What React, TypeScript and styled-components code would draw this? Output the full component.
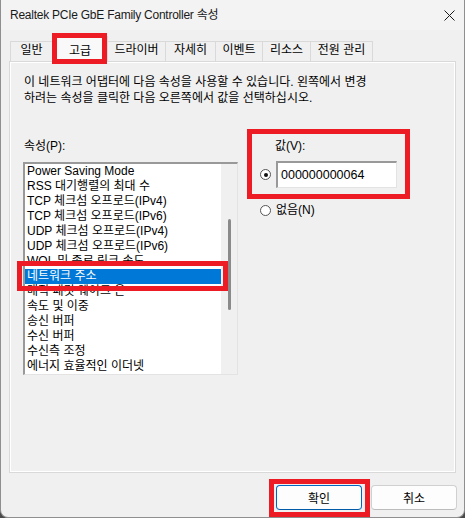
import React from "react";
import styled, { createGlobalStyle } from "styled-components";

const Global = createGlobalStyle`
    html, body {
        margin:0;
        padding:0;
        background:#4a4a4a;
    }
    body {
        font-family: "Liberation Sans", "Noto Sans CJK KR", sans-serif;
        font-size:12px;
        color:#000;
    }
`;

const Window = styled.div`
    width:465px;
    height:518px;
    box-sizing:border-box;
    background:#f0f0f0;
    border:1px solid #8f8f8f;
    border-top:none;
    border-radius:0 0 8px 8px;
    display:flex;
    flex-direction:column;
    overflow:hidden;
`;

const TitleBar = styled.div`
    height:30px;
    flex:0 0 30px;
    display:flex;
    align-items:center;
    justify-content:space-between;
    padding:0 9px 0 9px;
    background:#f3f3f3;
    color:#1a1a1a;
`;

const Title = styled.span`
    line-height:16px;
    letter-spacing:-0.25px;
`;

const TabStrip = styled.div`
    height:31px;
    flex:0 0 31px;
    display:flex;
    align-items:flex-end;
    margin:0 8px;
    padding-left:1px;
`;

const Tab = styled.div<{ $w: number; $active?: boolean }>`
    position:relative;
    width:${p => p.$w}px;
    height:${p => (p.$active ? 26 : 20)}px;
    margin-left:-1px;
    margin-bottom:${p => (p.$active ? -1 : 0)}px;
    box-sizing:border-box;
    border:1px solid #d9d9d9;
    border-bottom:none;
    background:${p => (p.$active ? "#f9f9f9" : "#f0f0f0")};
    z-index:${p => (p.$active ? 1 : 0)};
    display:flex;
    align-items:flex-end;
    justify-content:center;
    padding-bottom:4px;
    line-height:14px;
    white-space:nowrap;
    &:first-child {
        margin-left:0;
    }
`;

const Panel = styled.div`
    flex:0 0 412px;
    margin:0 8px;
    box-sizing:border-box;
    border:1px solid #d9d9d9;
    box-shadow:inset 0 0 0 1px #fff;
    padding:12px 13px 0 13px;
`;

const Desc = styled.div`
    padding-left:1px;
    line-height:16px;
    white-space:nowrap;
`;

const Columns = styled.div`
    display:flex;
    align-items:flex-start;
    margin-top:32px;
`;

const LeftCol = styled.div`
    width:215px;
    display:flex;
    flex-direction:column;
`;

const RightCol = styled.div`
    margin-left:22px;
    display:flex;
    flex-direction:column;
`;

const FieldLabel = styled.div<{ $indent: number }>`
    padding-left:${p => p.$indent}px;
    line-height:16px;
`;

const ListBox = styled.div`
    margin-top:8px;
    height:213px;
    box-sizing:border-box;
    border-style:solid;
    border-width:2px 1px 1px 2px;
    border-color:#999 #e3e3e3 #e3e3e3 #999;
    display:flex;
    background:#fff;
`;

const Items = styled.div`
    flex:1;
    display:flex;
    flex-direction:column;
`;

const Item = styled.div<{ $selected?: boolean }>`
    position:relative;
    height:15px;
    flex:0 0 15px;
    line-height:15px;
    padding-left:2px;
    white-space:nowrap;
    background:${p => (p.$selected ? "#0078d7" : "transparent")};
    color:${p => (p.$selected ? "#fff" : "#000")};
`;

const Track = styled.div`
    width:16px;
    background:#f0f0f0;
    display:flex;
    justify-content:center;
`;

const Thumb = styled.div`
    width:3px;
    height:91px;
    margin-top:55px;
    border-radius:2px;
    background:#8a8a8a;
`;

const ValueGroup = styled.div`
    position:relative;
    display:flex;
    flex-direction:column;
`;

const RadioRow = styled.div<{ $top: number }>`
    display:flex;
    align-items:center;
    gap:5px;
    margin-top:${p => p.$top}px;
    line-height:16px;
`;

const Radio = styled.span<{ $checked?: boolean }>`
    width:11px;
    height:11px;
    box-sizing:border-box;
    border:1px solid #555;
    border-radius:50%;
    background:#fff;
    display:flex;
    align-items:center;
    justify-content:center;
    &::after {
        content:"";
        width:4px;
        height:4px;
        border-radius:50%;
        background:${p => (p.$checked ? "#111" : "transparent")};
    }
`;

const TextBox = styled.div`
    width:121px;
    height:27px;
    box-sizing:border-box;
    border-style:solid;
    border-width:2px 1px 1px 2px;
    border-color:#999 #e3e3e3 #e3e3e3 #999;
    background:#fff;
    padding-left:3px;
    display:flex;
    align-items:center;
    font-size:12.5px;
`;

const Footer = styled.div`
    flex:1;
    display:flex;
    justify-content:flex-end;
    align-items:flex-start;
    gap:9px;
    padding:12px 7px 0 0;
`;

const Button = styled.button<{ $primary?: boolean }>`
    position:relative;
    width:86px;
    height:25px;
    box-sizing:border-box;
    border:1px solid ${p => (p.$primary ? "#0067c0" : "#d0d0d0")};
    border-bottom-color:${p => (p.$primary ? "#005aa8" : "#bcbcbc")};
    border-radius:4px;
    background:#fdfdfd;
    font-family:inherit;
    font-size:12px;
    color:#000;
    padding:0;
`;

// red annotation frame drawn over the screenshot
const Mark = styled.span<{ $t: number; $r: number; $b: number; $l: number }>`
    position:absolute;
    top:${p => p.$t}px;
    right:${p => p.$r}px;
    bottom:${p => p.$b}px;
    left:${p => p.$l}px;
    border:5px solid #ed1c24;
    pointer-events:none;
    z-index:5;
`;

const tabs = [
    { label: "일반", w: 43 },
    { label: "고급", w: 56, active: true },
    { label: "드라이버", w: 59 },
    { label: "자세히", w: 51 },
    { label: "이벤트", w: 48 },
    { label: "리소스", w: 49 },
    { label: "전원 관리", w: 63 },
];

const props = [
    "Power Saving Mode",
    "RSS 대기행렬의 최대 수",
    "TCP 체크섬 오프로드(IPv4)",
    "TCP 체크섬 오프로드(IPv6)",
    "UDP 체크섬 오프로드(IPv4)",
    "UDP 체크섬 오프로드(IPv6)",
    "WOL 및 종료 링크 속도",
    "네트워크 주소",
    "매직 패킷 웨이크 온",
    "속도 및 이중",
    "송신 버퍼",
    "수신 버퍼",
    "수신측 조정",
    "에너지 효율적인 이더넷",
];

function App() {
    return (
        <>
            <Global />
            <Window>
                <TitleBar>
                    <Title>Realtek PCIe GbE Family Controller 속성</Title>
                    <svg width="11" height="11" viewBox="0 0 11 11">
                        <path d="M0.5 0.5 L10.5 10.5 M10.5 0.5 L0.5 10.5" stroke="#1a1a1a" strokeWidth="1" />
                    </svg>
                </TitleBar>
                <TabStrip>
                    {tabs.map(t => (
                        <Tab key={t.label} $w={t.w} $active={t.active}>
                            {t.label}
                            {t.active && <Mark $t={-4} $r={0} $b={-2} $l={-1} />}
                        </Tab>
                    ))}
                </TabStrip>
                <Panel>
                    <Desc>
                        이 네트워크 어댑터에 다음 속성을 사용할 수 있습니다. 왼쪽에서 변경
                        <br />
                        하려는 속성을 클릭한 다음 오른쪽에서 값을 선택하십시오.
                    </Desc>
                    <Columns>
                        <LeftCol>
                            <FieldLabel $indent={1}>속성(P):</FieldLabel>
                            <ListBox>
                                <Items>
                                    {props.map(p => {
                                        const sel = p === "네트워크 주소";
                                        return (
                                            <Item key={p} $selected={sel}>
                                                {p}
                                                {sel && <Mark $t={-8} $r={-7} $b={-7} $l={-8} />}
                                            </Item>
                                        );
                                    })}
                                </Items>
                                <Track>
                                    <Thumb />
                                </Track>
                            </ListBox>
                        </LeftCol>
                        <RightCol>
                            <ValueGroup>
                                <FieldLabel $indent={15}>값(V):</FieldLabel>
                                <RadioRow $top={7}>
                                    <Radio $checked />
                                    <TextBox>000000000064</TextBox>
                                </RadioRow>
                                <Mark $t={-9} $r={-13} $b={-11} $l={-13} />
                            </ValueGroup>
                            <RadioRow $top={14}>
                                <Radio />
                                <span>없음(N)</span>
                            </RadioRow>
                        </RightCol>
                    </Columns>
                </Panel>
                <Footer>
                    <Button $primary>
                        확인
                        <Mark $t={-7} $r={-9} $b={-8} $l={-8} />
                    </Button>
                    <Button>취소</Button>
                </Footer>
            </Window>
        </>
    );
}

export default App;
